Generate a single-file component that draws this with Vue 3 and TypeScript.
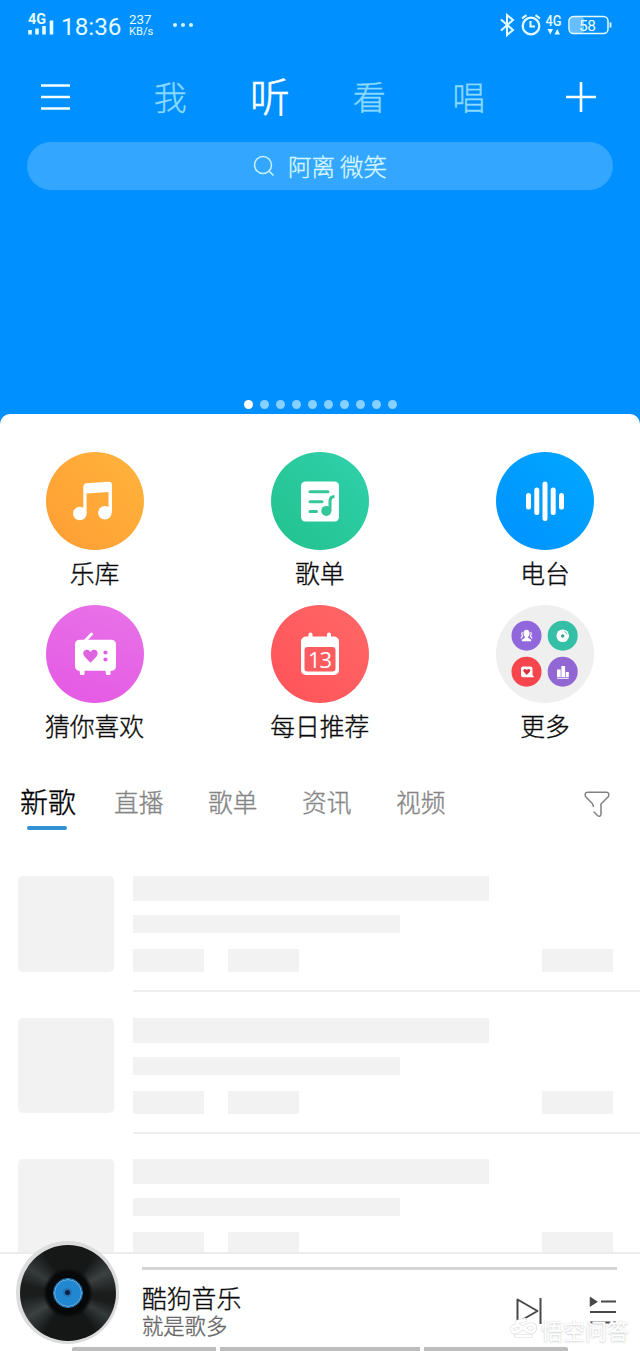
<script setup lang="ts">
interface Shortcut {
  id: string
  label: string
}

const navItems: string[] = ['我', '听', '看', '唱']
const activeNav = '听'
const slideCount = 10
const shortcuts: Shortcut[] = [
  { id: 'library', label: '乐库' },
  { id: 'playlist', label: '歌单' },
  { id: 'radio', label: '电台' },
  { id: 'guess', label: '猜你喜欢' },
  { id: 'daily', label: '每日推荐' },
  { id: 'more', label: '更多' },
]
const tabs: string[] = ['新歌', '直播', '歌单', '资讯', '视频']
</script>

<template>
  <div class="page">
    <header class="hero">
      <div class="status">
        <svg class="signal" width="28" height="26" viewBox="0 0 28 26">
          <text x="0" y="12.500" class="net" textLength="18" lengthAdjust="spacingAndGlyphs">4G</text>
          <path d="M2 19V23.500M9 17.500V23.500M16 15V23.500M23.500 9.500V23.500" stroke="#e6fbff" stroke-width="3.600" />
        </svg>
        <span class="clock">18:36</span>
        <span class="speed"><span class="rate">237</span><span class="unit">KB/s</span></span>
        <span class="ellipsis"><i></i><i></i><i></i></span>
        <svg class="system" width="114" height="26" viewBox="0 0 114 26" fill="none" stroke="#e6fbff">
          <path d="M2 7.500 14 18 8 23V3L14 8 2 18.500" stroke-width="2" />
          <circle cx="32" cy="14" r="8.300" stroke-width="2.200" />
          <path d="M31.500 9V14.500H36M23 6.500 27.500 3.200M41 6.500 36.500 3.200" stroke-width="2.100" />
          <text x="46.500" y="13.500" class="net small" textLength="16" lengthAdjust="spacingAndGlyphs">4G</text>
          <path d="M48.500 17h5.500l-2.750 5.500zM55.500 22.500H61l-2.750-5.500z" fill="#e6fbff" stroke="none" />
          <rect x="71" y="5" width="14" height="16" rx="3" fill="#66bdff" stroke="none" />
          <rect x="70" y="4.500" width="39" height="17" rx="4.500" stroke-width="1.500" />
          <path d="M111.500 10.500v5" stroke-width="1.800" />
          <text x="80" y="18.500" class="battery" textLength="17">58</text>
        </svg>
      </div>

      <nav class="nav">
        <svg class="menu" width="30" height="28" viewBox="0 0 30 28">
          <path d="M1 2.500H30M1 14H30M1 25.500H30" stroke="#f2feff" stroke-width="2.500" />
        </svg>
        <span v-for="item in navItems" :key="item" class="nav-item" :class="{ active: item === activeNav }">{{ item }}</span>
        <svg class="plus" width="30" height="30" viewBox="0 0 30 30">
          <path d="M0 15H30M15 0V30" stroke="#f8ffff" stroke-width="2.600" />
        </svg>
      </nav>

      <div class="search">
        <svg width="22" height="22" viewBox="0 0 22 22" fill="none" stroke="#c9f3ff" stroke-width="1.500">
          <circle cx="10" cy="10" r="8.500" />
          <path d="m16 16 4.500 4.500" />
        </svg>
        <span>阿离 微笑</span>
      </div>

      <div class="dots">
        <i v-for="n in slideCount" :key="n" :class="{ on: n === 1 }"></i>
      </div>
    </header>

    <main class="sheet">
      <section class="grid">
        <div v-for="s in shortcuts" :key="s.id" class="shortcut">
          <div class="disc" :class="s.id">
            <svg width="98" height="98" viewBox="0 0 98 98">
              <g v-if="s.id === 'library'" fill="#fff">
                <circle cx="33.800" cy="61.500" r="6.800" />
                <circle cx="58.900" cy="60.800" r="6.800" />
                <path d="M37.300 62V35Q37.300 31.500 40.800 31.200L62.500 29.800Q66 29.600 66 33V61H62.500V40L40.600 41.500V62Z" />
              </g>
              <g v-else-if="s.id === 'playlist'">
                <rect x="30" y="29.500" width="38" height="40" rx="4.500" fill="#fff" />
                <path d="M39 39.800H57M39 49.800H51M39 59.500H45.500" stroke="#36c69c" stroke-width="3" stroke-linecap="round" />
                <circle cx="55.300" cy="58.900" r="5" fill="#36c69c" />
                <path d="M59 59V49Q59 44.500 63.500 44.500" fill="none" stroke="#36c69c" stroke-width="3" />
              </g>
              <path v-else-if="s.id === 'radio'" d="M32.500 43.500V55M40.800 38V60.500M49 32V66.500M57.200 38V60.500M65.500 43.500V55" stroke="#fff" stroke-width="5" stroke-linecap="round" />
              <g v-else-if="s.id === 'guess'" fill="#fff">
                <path d="m38.500 36.500 7-7.500" stroke="#fff" stroke-width="3" stroke-linecap="round" />
                <rect x="29" y="34.800" width="41" height="31" rx="4.500" />
                <path d="M33.500 65h5v4q0 1-1 1h-2.500q-1 0-1-1zM59.500 65h5v4q0 1-1 1H61q-1 0-1-1z" />
                <path d="M44.500 57.800 38.700 51.800C34.500 46.500 41 42 44.500 47 48 42 54.500 46.500 50.300 51.800Z" fill="#df63df" />
                <circle cx="59.500" cy="47.500" r="2.100" fill="#df63df" />
                <circle cx="59.500" cy="54.500" r="2.100" fill="#df63df" />
              </g>
              <g v-else-if="s.id === 'daily'">
                <path d="M39.500 29.500V36M58 29.500V36" stroke="#fff" stroke-width="4" stroke-linecap="round" />
                <rect x="30" y="31.500" width="38" height="38.500" rx="5" fill="#fff" />
                <rect x="33.500" y="42" width="31" height="24.500" rx="3" fill="#fb5c5f" />
                <text x="37" y="62.500" class="date" textLength="24">13</text>
              </g>
              <g v-else>
                <circle cx="30.500" cy="30.700" r="15" fill="#9168dc" />
                <circle cx="66.700" cy="30.700" r="15" fill="#34bfa6" />
                <circle cx="30.500" cy="66.700" r="15" fill="#f6454c" />
                <circle cx="66.700" cy="66.700" r="15" fill="#9168d3" />
                <g fill="#fff">
                  <ellipse cx="30.500" cy="28.500" rx="3" ry="3.700" />
                  <path d="M29.200 31h2.600v1.500l3.300 2.300v1.500h-9.200v-1.500l3.300-2.300z" />
                  <path d="M26.300 27q-1.200 2.200.2 4.200l-1.700 2.300M34.700 27q1.200 2.200-.2 4.200l1.700 2.300" fill="none" stroke="#fff" stroke-width="1.200" />
                  <circle cx="66.700" cy="30.700" r="6.300" />
                  <path d="M27 61.500h7.500q2 0 2 2V70l1.700 2.300H27q-2 0-2-2v-6.800q0-2 2-2z" />
                  <path d="M61 64.500h3.700v7.500H61zM65.400 61h3.700v11h-3.700zM69.800 67h3v5h-3zM61 72.700h11.800v1H61z" />
                </g>
                <circle cx="66.700" cy="31" r="1.700" fill="#34a690" />
                <path d="M68 26.500q2.500.5 3 3" fill="none" stroke="#34bfa6" stroke-width=".8" />
                <path d="m30.800 70-3-3.200c-1.700-2.300 1.300-4 3-1.900 1.700-2.100 4.700-.4 3 1.900z" fill="#d8333b" />
              </g>
            </svg>
          </div>
          <span>{{ s.label }}</span>
        </div>
      </section>

      <nav class="tabs">
        <span v-for="(tab, i) in tabs" :key="tab" class="tab" :class="{ current: i === 0 }">{{ tab }}</span>
        <svg class="filter" width="26" height="27" viewBox="0 0 26 27" fill="none" stroke="#808080" stroke-width="1.500" stroke-linecap="round" stroke-linejoin="round">
          <path d="M9.500 15.500 8.300 12.500 1.500 5.500Q.3 1.500 3.500 1.200H22.500Q25.700 1.500 24.500 5.500L17 13V23.500Q16 26.500 13.500 24.500L10 21" />
        </svg>
      </nav>

      <section class="songs">
        <article v-for="n in 3" :key="n" class="song">
          <div class="cover"></div>
          <div class="lines">
            <div class="bar title"></div>
            <div class="bar artist"></div>
            <div class="chips">
              <div class="bar chip"></div>
              <div class="bar chip"></div>
              <div class="bar chip end"></div>
            </div>
          </div>
        </article>
      </section>
    </main>

    <footer class="player">
      <div class="record"><div class="vinyl"><div class="core"><i></i></div></div></div>
      <div class="progress"></div>
      <div class="now">
        <div class="meta">
          <strong>酷狗音乐</strong>
          <span>就是歌多</span>
        </div>
        <svg class="next" width="28" height="28" viewBox="0 0 28 28" fill="none" stroke="#484848" stroke-width="2">
          <path d="M2.500 2.500V25.500L22.500 14ZM25.500 1V27" stroke-linejoin="round" />
        </svg>
        <svg class="queue" width="28" height="28" viewBox="0 0 28 28" stroke="#484848" stroke-width="2.200">
          <path d="M12 5.500H27M1 16H27M1 26.500H27" />
          <path d="M1.500 2 7.500 5.800 1.500 9.600Z" fill="#484848" stroke-width="1.500" />
        </svg>
      </div>
      <div class="keys"><i></i><i class="home"></i><i></i></div>
      <div class="mark">
        <svg width="28" height="22" viewBox="0 0 28 22" fill="none" stroke-linecap="round">
          <path d="M7 8Q1 8 2 12 4 16 8 13L18 7Q25 5 25 11 23 16 18 13L10 8Q6 6 7 4L15 2M6 18H21" stroke="#dadada" stroke-width="4.200" />
          <path d="M7 8Q1 8 2 12 4 16 8 13L18 7Q25 5 25 11 23 16 18 13L10 8Q6 6 7 4L15 2M6 18H21" stroke="#fff" stroke-width="3" />
        </svg>
        <span>悟空问答</span>
      </div>
    </footer>
  </div>
</template>

<style>
body {
  margin: 0;
}
</style>

<style scoped>
.page {
  width: 640px;
  height: 1351px;
  display: flex;
  flex-direction: column;
  overflow: hidden;
  background: #0090ff;
  font-family: "Noto Sans CJK SC", sans-serif;
  font-weight: 300;
  -webkit-text-stroke: 0.35px currentColor;
}
svg {
  display: block;
  flex: none;
}
svg text {
  -webkit-text-stroke: 0;
}
.hero {
  height: 414px;
  flex: none;
  display: flex;
  flex-direction: column;
}
.status {
  height: 50px;
  display: flex;
  align-items: flex-start;
  padding: 11px 27px 0 28px;
  box-sizing: border-box;
  color: #e6fbff;
  font-family: Roboto, sans-serif;
  font-weight: 400;
  -webkit-text-stroke: 0;
}
.net {
  font: 700 14.500px Roboto, sans-serif;
  fill: #e6fbff;
  stroke: none;
}
.net.small {
  font-weight: 500;
}
.battery {
  font: 400 15.500px Roboto, sans-serif;
  fill: #e6fbff;
  stroke: none;
}
.clock {
  margin: 4px 0 0 5px;
  width: 68px;
  font-size: 24.300px;
  line-height: 24px;
}
.speed {
  display: flex;
  flex-direction: column;
  width: 44px;
  margin-top: 1px;
}
.rate {
  font-size: 13.300px;
  line-height: 15px;
  height: 13px;
}
.unit {
  font-size: 11.200px;
  line-height: 13px;
}
.ellipsis {
  display: flex;
  gap: 4px;
  margin-top: 12px;
}
.ellipsis i {
  width: 4px;
  height: 4px;
  border-radius: 50%;
  background: #d5f6ff;
}
.system {
  margin: 1px 0 0 auto;
}
.nav {
  height: 92px;
  display: flex;
  align-items: center;
  padding: 0 44px 0 41px;
}
.menu {
  margin: 2px 50.500px 0 -1px;
}
.nav-item {
  width: 99.500px;
  height: 48px;
  text-align: center;
  font-size: 33px;
  line-height: 48px;
  color: #8ad9ff;
}
.nav-item.active {
  font-size: 39.500px;
  line-height: 45px;
  color: #fff;
  -webkit-text-stroke-width: 0.6px;
}
.plus {
  margin: 2px 0 0 auto;
}
.search {
  height: 48px;
  margin: 0 27px;
  border-radius: 24px;
  background: #33a6ff;
  display: flex;
  align-items: center;
  justify-content: center;
  gap: 13px;
  color: #d6f6ff;
  font-size: 23.500px;
  line-height: 48px;
}
.dots {
  margin-top: auto;
  padding-bottom: 5.500px;
  display: flex;
  justify-content: center;
  gap: 7px;
}
.dots i {
  width: 9px;
  height: 9px;
  border-radius: 50%;
  background: #86d0ff;
}
.dots .on {
  background: #fff;
}
.sheet {
  flex: 1;
  min-height: 0;
  overflow: hidden;
  background: #fff;
  border-radius: 10px 10px 0 0;
}
.grid {
  display: grid;
  grid-template-columns: repeat(3, 110px);
  grid-auto-rows: 153px;
  justify-content: space-between;
  padding: 38.400px 40px 0 39.500px;
}
.shortcut {
  display: flex;
  flex-direction: column;
  align-items: center;
  font-size: 24.800px;
  line-height: 36px;
  color: #0a0a0a;
  white-space: nowrap;
  gap: 3.200px;
}
.disc {
  width: 98px;
  height: 98px;
  border-radius: 50%;
}
.library { background: linear-gradient(45deg, #ff9d34, #ffb43c); }
.playlist { background: linear-gradient(45deg, #23c18d, #30d1ad); }
.radio { background: linear-gradient(45deg, #0091ff, #00a8ff); }
.guess { background: linear-gradient(20deg, #e458e4, #e873e8); }
.daily { background: linear-gradient(45deg, #ff5258, #ff6868); }
.more { background: #efefef; }
.date {
  font: 400 22px "Open Sans", sans-serif;
  fill: #fff;
}
.tabs {
  height: 70px;
  margin-top: 15.600px;
  display: flex;
  align-items: flex-start;
  padding: 6px 30px 0 20px;
  box-sizing: border-box;
}
.tab {
  width: 94px;
  font-size: 24.700px;
  line-height: 43px;
  color: #858585;
}
.tab.current {
  font-size: 28px;
  line-height: 42px;
  color: #000;
}
.tab.current::after {
  content: "";
  display: block;
  width: 40px;
  height: 4px;
  margin: 4px 0 0 7px;
  border-radius: 2px;
  background: #3391d5;
}
.filter {
  margin: 11px 0 0 auto;
}
.songs {
  padding: 32.500px 0 0 18px;
}
.song {
  display: flex;
  height: 141.500px;
  gap: 19px;
}
.cover {
  width: 96px;
  height: 95.500px;
  border-radius: 5px;
  background: #f2f2f2;
  flex: none;
}
.lines {
  flex: 1;
  height: 114px;
  border-bottom: 2px solid #efefef;
}
.bar {
  background: #f2f2f2;
}
.title {
  width: 356px;
  height: 25px;
}
.artist {
  width: 267px;
  height: 18px;
  margin: 14px 0 16px;
}
.chips {
  display: flex;
  gap: 24px;
  padding-right: 27px;
}
.chip {
  width: 71px;
  height: 23px;
}
.end {
  margin-left: auto;
}
.player {
  position: relative;
  flex: none;
  height: 99px;
  box-sizing: border-box;
  border-top: 2px solid #ececec;
  background: #fff;
  padding: 13px 23px 0 142px;
}
.record {
  position: absolute;
  left: 16px;
  top: -13px;
  width: 103px;
  height: 103px;
  box-sizing: border-box;
  padding: 3.500px;
  border-radius: 50%;
  background: #dcdcdc;
}
.vinyl {
  width: 96px;
  height: 96px;
  border-radius: 50%;
  display: flex;
  align-items: center;
  justify-content: center;
  background:
    radial-gradient(circle, #070809 0 21px, transparent 25px),
    conic-gradient(#161818 0 35deg, #3b4040 62deg, #1b1d1d 90deg 103deg, #343939 120deg, #151717 145deg 210deg, #3b4040 239deg, #1b1d1d 265deg 280deg, #353a3a 302deg, #161818 330deg);
}
.core {
  width: 26px;
  height: 26px;
  border: 1.500px solid #77b8e8;
  outline: 1px solid #2389d2;
  border-radius: 50%;
  background: #2187d0;
  display: flex;
  align-items: center;
  justify-content: center;
}
.core i {
  width: 5px;
  height: 5px;
  border-radius: 50%;
  background: #0a2148;
  box-shadow: 0 0 0 2px #2a72ae;
}
.progress {
  height: 3px;
  background: #d5d5d5;
}
.now {
  display: flex;
  align-items: flex-start;
}
.meta {
  display: flex;
  flex-direction: column;
  flex: 1;
  padding-top: 12px;
}
.meta strong {
  font-size: 24.800px;
  line-height: 31px;
  font-weight: 300;
  color: #0a0a0a;
}
.meta span {
  font-size: 21.300px;
  line-height: 23px;
  color: #666;
}
.next {
  margin: 27px 46px 0 0;
}
.queue {
  margin-top: 26px;
}
.keys {
  position: absolute;
  left: 72px;
  bottom: 0;
  display: flex;
  gap: 4px;
}
.keys i {
  width: 144px;
  height: 4px;
  background: #bdbdbd;
  border-radius: 2px 0 0 0;
}
.keys .home {
  width: 200px;
  border-radius: 0;
}
.keys i:last-child {
  border-radius: 0 2px 0 0;
}
.mark {
  position: absolute;
  right: 11px;
  bottom: 10px;
  display: flex;
  align-items: center;
  gap: 3px;
  color: #fff;
  font-size: 22px;
  font-weight: 400;
  line-height: 24px;
  text-shadow: 0 0 1px #bbb, 0 1px 2px #ccc;
}
</style>
